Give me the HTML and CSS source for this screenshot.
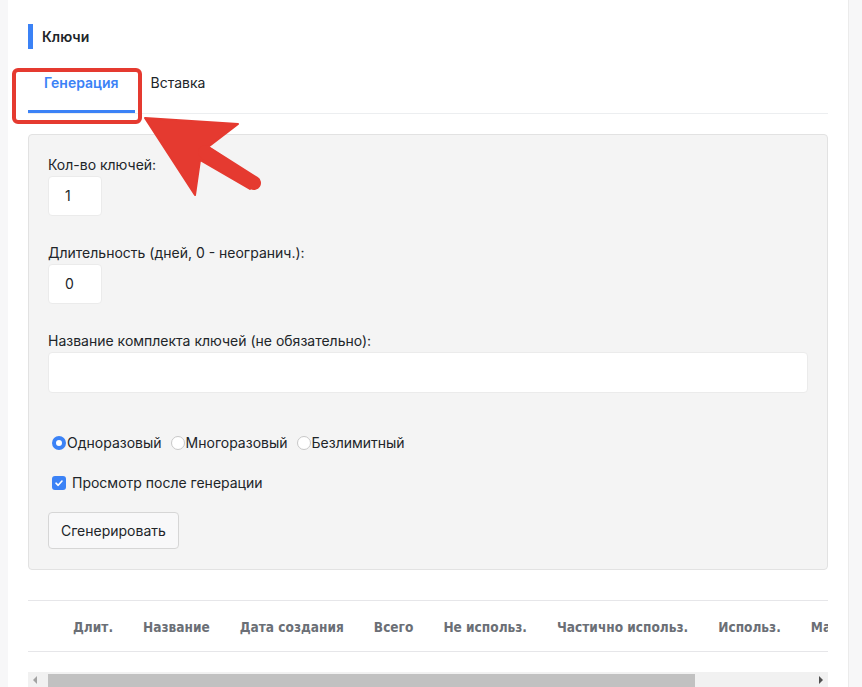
FILE: index.html
```html
<!DOCTYPE html>
<html lang="ru">
<head>
    <meta charset="UTF-8">
    <title>Ключи</title>
    <link rel="stylesheet" href="styles.css">
</head>
<body>

    <div class="card">
        <div class="card-title">Ключи</div>

        <div class="tabs">
            <div class="tab active">Генерация</div>
            <div class="tab">Вставка</div>
        </div>

        <div class="panel">
            <div class="form-group">
                <label>Кол-во ключей:</label>
                <div class="input small">1</div>
            </div>
            <div class="form-group">
                <label>Длительность (дней, 0 - неогранич.):</label>
                <div class="input small">0</div>
            </div>
            <div class="form-group">
                <label>Название комплекта ключей (не обязательно):</label>
                <div class="input wide"></div>
            </div>

            <div class="radios">
                <span class="radio checked"></span>Одноразовый
                <span class="radio"></span>Многоразовый
                <span class="radio"></span>Безлимитный
            </div>

            <div class="check-row">
                <span class="checkbox">
                    <svg width="10" height="10" viewBox="0 0 10 10"><path d="M2 5.2 L4.2 7.3 L8 3" fill="none" stroke="#fff" stroke-width="1.6" stroke-linecap="round" stroke-linejoin="round"/></svg>
                </span>
                Просмотр после генерации
            </div>

            <button class="btn">Сгенерировать</button>
        </div>

        <div class="table-wrap">
            <table class="keys-table">
                <thead>
                    <tr>
                        <th></th>
                        <th>Длит.</th>
                        <th>Название</th>
                        <th>Дата создания</th>
                        <th>Всего</th>
                        <th>Не использ.</th>
                        <th>Частично использ.</th>
                        <th>Использ.</th>
                        <th>Макс.</th>
                    </tr>
                </thead>
            </table>
        </div>

        <div class="hscroll">
            <span class="arr left"></span>
            <div class="thumb"></div>
            <span class="arr right"></span>
        </div>
    </div>

    <!-- annotation overlay -->
    <div class="mark-box"></div>
    <svg class="mark-arrow" width="862" height="687" viewBox="0 0 862 687">
        <polygon points="145,118 238,124 208,147 257,180 250,189 200,160 195,195" fill="#e53a30" stroke="#e53a30" stroke-width="2" stroke-linejoin="round"/>
        <line x1="205" y1="152" x2="254" y2="183" stroke="#e53a30" stroke-width="14" stroke-linecap="round"/>
    </svg>

</body>
</html>
```

FILE: styles.css
```css
body {
    margin: 0;
    background-color: #f7f7f8;
    font-family: Inter, "Noto Sans", sans-serif;
    font-size: 14px;
    color: #212529;
    height: 687px;
    overflow: hidden;
}
.card {
    margin-left: 8px;
    width: 800px;
    height: 663px;
    padding: 24px 20px 0 20px;
    background-color: #fff;
    border-right: 1px solid #ebebeb;
}
.card-title {
    border-left: 5px solid #3b82f6;
    padding-left: 9px;
    height: 25px;
    line-height: 26px;
    font-weight: 600;
}
.tabs {
    display: flex;
    margin-top: 18px;
    border-bottom: 1px solid #eceef0;
    height: 46px;
}
.tab {
    padding: 8px 16px 0 16px;
    line-height: 16px;
}
.tab.active {
    color: #3b82f6;
    font-weight: 600;
    border-bottom: 3px solid #3b82f6;
    height: 35px;
}
.panel {
    margin-top: 20px;
    background-color: #f4f4f4;
    border: 1px solid #e2e2e2;
    border-radius: 4px;
    padding: 21px 19px 20px 19px;
}
.form-group {
    margin-bottom: 28px;
}
.form-group label {
    display: block;
    line-height: 17px;
    margin-bottom: 3px;
}
.input {
    background-color: #fff;
    border: 1px solid #ebebeb;
    border-radius: 4px;
    box-sizing: border-box;
    line-height: 38px;
    height: 40px;
    padding-left: 16px;
}
.input.small {
    width: 54px;
}
.input.wide {
    height: 41px;
    width: 760px;
}
.radios {
    margin-top: 41px;
    padding-left: 4px;
    line-height: 17px;
    display: flex;
    align-items: center;
}
.radio {
    display: inline-block;
    width: 14px;
    height: 14px;
    box-sizing: border-box;
    border: 1px solid #c8c8c8;
    border-radius: 50%;
    background-color: #fff;
    margin-left: 9px;
    margin-right: 1px;
}
.radio.checked {
    border: 4px solid #3b82f6;
    margin-left: 0;
}
.check-row {
    margin-top: 23px;
    padding-left: 4px;
    line-height: 17px;
    display: flex;
    align-items: center;
}
.checkbox {
    width: 14px;
    height: 14px;
    border-radius: 3px;
    background-color: #3b82f6;
    margin-right: 6px;
    display: flex;
    align-items: center;
    justify-content: center;
}
.btn {
    display: block;
    margin-top: 21px;
    font-family: Inter, "Noto Sans", sans-serif;
    font-size: 14px;
    color: #212529;
    background-color: #f8f8f9;
    border: 1px solid #d6d6d6;
    border-radius: 4px;
    height: 37px;
    padding: 0 12px;
}
.table-wrap {
    margin-top: 30px;
    overflow: hidden;
    width: 800px;
}
.keys-table {
    border-collapse: collapse;
    border-top: 1px solid #e6e6e9;
    border-bottom: 1px solid #e6e6e9;
}
.keys-table th {
    font-family: "DejaVu Sans Condensed", "Liberation Sans", sans-serif;
    font-size: 13.55px;
    font-weight: bold;
    color: #6b6f76;
    white-space: nowrap;
    padding: 2px 15px 0 15px;
    height: 48px;
    text-align: left;
}
.hscroll {
    margin-top: 20px;
    height: 15px;
    background-color: #f1f1f1;
    display: flex;
    align-items: flex-end;
}
.thumb {
    margin-left: 11px;
    width: 647px;
    height: 13px;
    background-color: #c1c1c1;
}
.arr {
    width: 0;
    height: 0;
    border-top: 4px solid transparent;
    border-bottom: 4px solid transparent;
    align-self: center;
}
.arr.left {
    margin-left: 5px;
    border-right: 4px solid #a3a3a3;
}
.arr.right {
    margin-left: auto;
    margin-right: 5px;
    border-left: 4px solid #505050;
}
.mark-box {
    position: absolute;
    left: 12px;
    top: 68px;
    width: 122px;
    height: 48px;
    border: 4px solid #e53a30;
    border-radius: 6px;
}
.mark-arrow {
    position: absolute;
    left: 0;
    top: 0;
}
```
